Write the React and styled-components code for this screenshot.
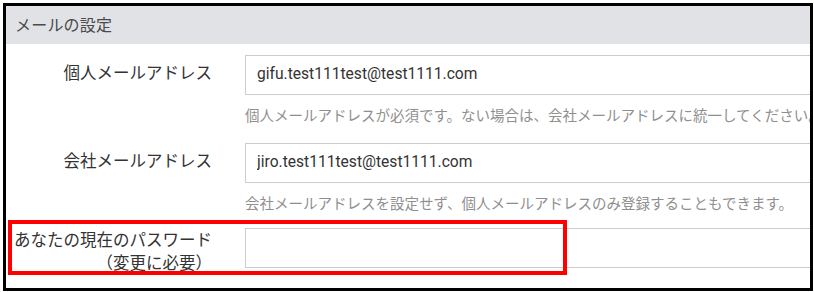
import React from "react";
import styled, { createGlobalStyle } from "styled-components";

const Global = createGlobalStyle`
  html, body { margin: 0; padding: 0; background: #ffffff; }
  body { font-family: "Noto Sans CJK JP", "Noto Sans", sans-serif; }
`;

const Frame = styled.div`
  margin: 3px 0 0 3px;
  width: 810px;
  height: 288px;
  box-sizing: border-box;
  border: 3px solid #000;
  overflow: hidden;
  background: #fff;
`;

const Header = styled.div`
  height: 38px;
  background: #e1e2e6;
  display: flex;
  align-items: center;
  padding: 0 0 3px 9px;
  box-sizing: border-box;
  font-size: 16px;
  color: #4a4a4a;
  letter-spacing: 0.2px;
`;

const Body = styled.div`
  display: flex;
  flex-direction: column;
  padding-top: 11px;
`;

const Row = styled.div`
  position: relative;
  display: grid;
  grid-template-columns: 206px 600px;
  column-gap: 33px;
  align-items: start;
  margin-bottom: ${(p) => p.$gap || 0}px;
`;

const Label = styled.div`
  text-align: right;
  font-size: 16.5px;
  line-height: ${(p) => p.$lh || 24}px;
  color: #333;
  white-space: nowrap;
  padding-top: ${(p) => p.$top || 0}px;
`;

const Field = styled.div`
  display: flex;
  flex-direction: column;
`;

const Input = styled.input`
  box-sizing: border-box;
  width: 600px;
  height: 40px;
  border: 1px solid #c9cdd3;
  border-radius: 0;
  padding: 0 11px 3px;
  font-family: "Roboto", "Noto Sans CJK JP", sans-serif;
  font-size: 15.6px;
  color: #333;
  background: #fff;
  outline: none;
`;

const Hint = styled.div`
  margin-top: 10px;
  font-size: 14.5px;
  line-height: 20px;
  color: #8f8f8f;
  white-space: nowrap;
`;

const Highlight = styled.div`
  position: absolute;
  left: 2px;
  top: -8px;
  width: 559px;
  height: 55px;
  box-sizing: border-box;
  border: 4px solid #ff0000;
  pointer-events: none;
`;

export default function App() {
  return (
    <>
      <Global />
      <Frame>
        <Header>メールの設定</Header>
        <Body>
          <Row $gap={18}>
            <Label $top={5}>個人メールアドレス</Label>
            <Field>
              <Input readOnly value="gifu.test111test@test1111.com" />
              <Hint>個人メールアドレスが必須です。ない場合は、会社メールアドレスに統一してください。</Hint>
            </Field>
          </Row>
          <Row $gap={15}>
            <Label $top={5}>会社メールアドレス</Label>
            <Field>
              <Input readOnly value="jiro.test111test@test1111.com" />
              <Hint>会社メールアドレスを設定せず、個人メールアドレスのみ登録することもできます。</Hint>
            </Field>
          </Row>
          <Row>
            <Label $top={-7} $lh={23}>
              あなたの現在のパスワード
              <br />
              （変更に必要）
            </Label>
            <Field>
              <Input type="password" readOnly value="" />
            </Field>
            <Highlight />
          </Row>
        </Body>
      </Frame>
    </>
  );
}
